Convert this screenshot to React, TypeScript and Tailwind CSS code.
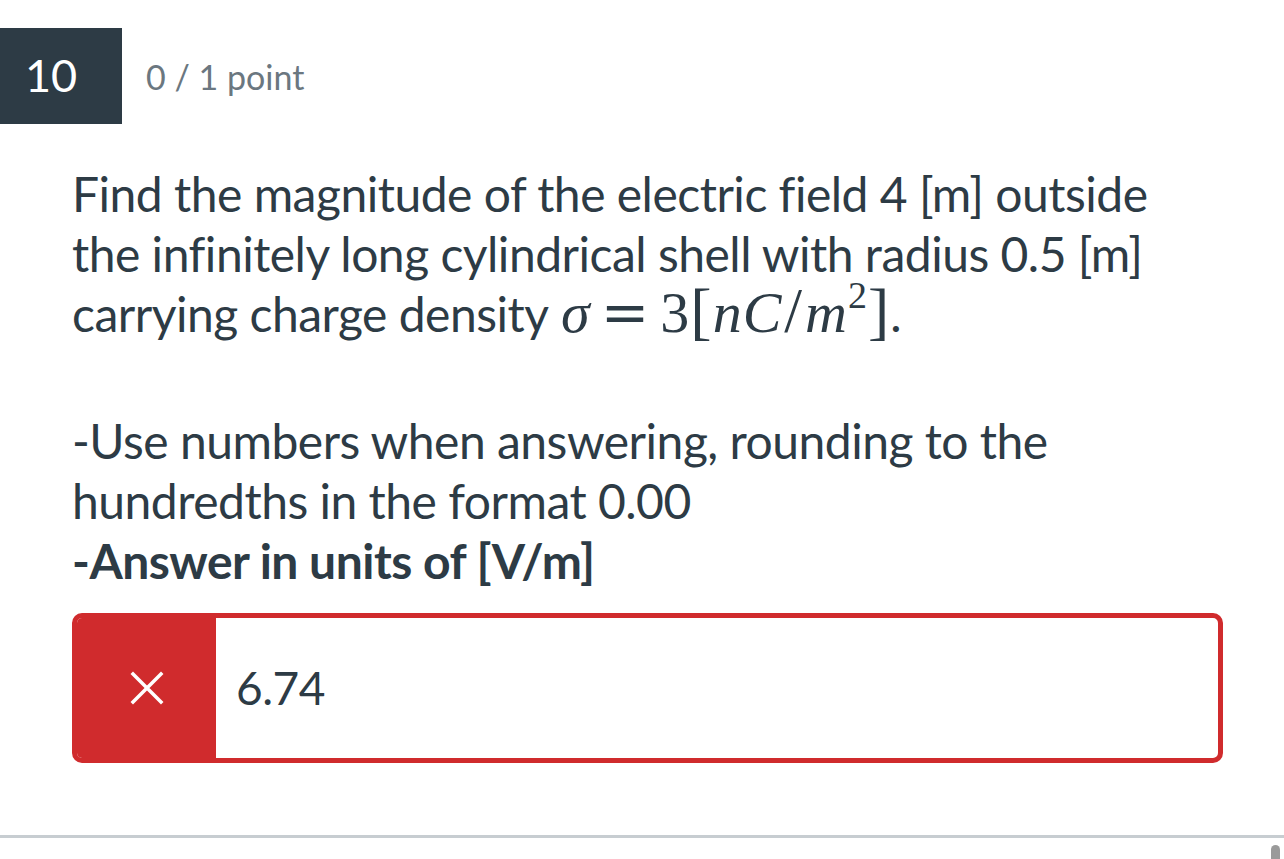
const LATO = "font-['Lato','Liberation_Sans',sans-serif]"
const SERIF = "font-['Liberation_Serif','DejaVu_Serif',serif]"

function MathSigma() {
  return (
    <span className={`${SERIF} ml-[2px] whitespace-nowrap text-[58px] leading-[40px] tracking-[1px]`}>
      <span className="italic">σ</span>
      <span className="mx-[10px] font-['DejaVu_Serif',serif] font-light">=</span>
      <span>3</span>
      <span className="text-[64px] font-light">[</span>
      <span className="italic">n</span>
      <span className="italic">C</span>
      <span className="mx-[2px] text-[64px] font-light">/</span>
      <span className="italic">m</span>
      <span className="inline-block -translate-y-[24px] text-[38px]">2</span>
      <span className="text-[64px] font-light">]</span>
    </span>
  )
}

function CrossIcon() {
  return (
    <svg width="34" height="34" viewBox="0 0 34 34" fill="none" stroke="white" strokeWidth="3.5" strokeLinecap="square">
      <path d="M3 3 L31 31 M31 3 L3 31" />
    </svg>
  )
}

export default function App() {
  return (
    <div className={`${LATO} flex min-h-[859px] flex-col bg-white text-[#2d3b45]`}>
      <header className="mt-[28px] flex items-center">
        <div className="flex h-[96px] w-[122px] items-center bg-[#2d3b45] pl-[25px] text-[45px] text-white">
          10
        </div>
        <span className="ml-[24px] text-[34px] text-[#6b7780]">0 / 1 point</span>
      </header>

      <section className="px-[72px] pt-[40px] text-[48px] leading-[60px] tracking-[-0.5px]">
        <p>
          Find the magnitude of the electric field 4 [m] outside the infinitely long cylindrical shell
          with radius 0.5 [m] carrying charge density <MathSigma />.
        </p>
        <p className="mt-[67px]">
          -Use numbers when answering, rounding to the hundredths in the format 0.00
          <br />
          <strong className="font-bold">-Answer in units of [V/m]</strong>
        </p>

        <div className="mt-[22px] flex h-[150px] w-[1151px] overflow-hidden rounded-[10px] border-[5px] border-[#d02b2d]">
          <div className="flex w-[139px] items-center justify-center bg-[#d02b2d]">
            <CrossIcon />
          </div>
          <div className="flex flex-1 items-center pl-[20px] text-[46px]">6.74</div>
        </div>
      </section>

      <div className="mt-[72px] h-[3px] w-full bg-[#c7cdd1]" />
      <div className="flex justify-end pr-[4px] pt-[7px]">
        <span className="h-[14px] w-[9px] rounded-t-full bg-[#9a9a9a]" />
      </div>
    </div>
  )
}
